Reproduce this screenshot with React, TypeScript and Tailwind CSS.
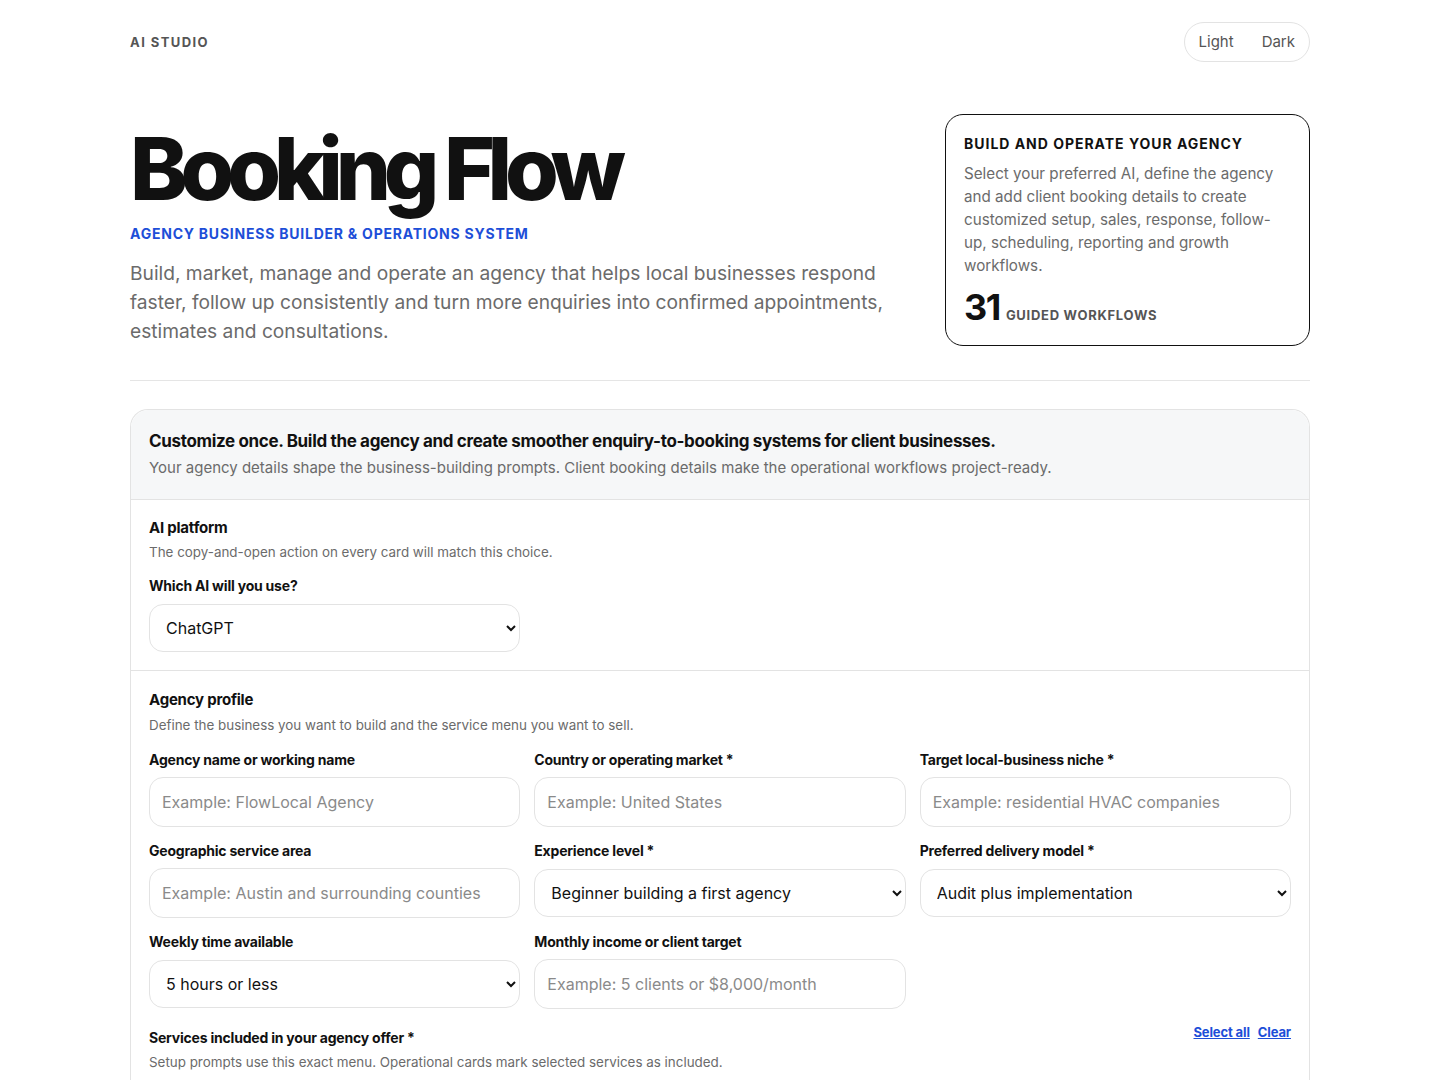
import React from "react";

const Field = ({ label, placeholder }: { label: string; placeholder: string }) => (
  <label className="flex flex-col">
    <span className="text-[14px] leading-5 font-bold tracking-[-0.015em] text-[#111]">{label}</span>
    <input
      placeholder={placeholder}
      className="mt-[7px] h-[50px] w-full rounded-[14px] border border-[#e3e3e3] bg-white px-3 text-[16px] text-[#111] placeholder:text-[#8a8a8a] outline-none"
    />
  </label>
);

const SelectField = ({ label, value, options }: { label: string; value: string; options: string[] }) => (
  <label className="flex flex-col">
    <span className="text-[14px] leading-5 font-bold tracking-[-0.015em] text-[#111]">{label}</span>
    <select
      defaultValue={value}
      className="mt-[8px] mb-px h-[48px] w-full rounded-[14px] border border-[#e3e3e3] bg-white px-3 text-[16px] text-[#111] outline-none"
    >
      {options.map((o) => (
        <option key={o}>{o}</option>
      ))}
    </select>
  </label>
);

export default function App() {
  return (
    <div className="min-h-screen bg-white font-['Inter',sans-serif] text-[#111]">
      <div className="mx-auto w-[1180px]">
        <header className="flex items-center justify-between pt-[22px]">
          <div className="mt-px text-[13px] font-bold tracking-[0.11em] text-[#555]">AI STUDIO</div>
          <div className="flex h-10 items-center rounded-full border border-[#e3e3e3]">
            <button className="px-[14px] text-[15px] text-[#555]">Light</button>
            <button className="px-[14px] text-[15px] text-[#555]">Dark</button>
          </div>
        </header>

        <section className="mt-[52px] flex items-start justify-between">
          <div className="w-[770px] pt-[11px]">
            <h1 className="text-[87px] leading-none font-extrabold tracking-[-0.083em] text-[#111]">Booking Flow</h1>
            <div className="mt-[12px] text-[14px] leading-5 font-bold tracking-[0.055em] text-[#1d4ed8]">
              AGENCY BUSINESS BUILDER &amp; OPERATIONS SYSTEM
            </div>
            <p className="mt-[15px] text-[19.2px] leading-[29px] text-[#6b6b6b]">
              Build, market, manage and operate an agency that helps local businesses respond faster, follow up
              consistently and turn more enquiries into confirmed appointments, estimates and consultations.
            </p>
          </div>
          <div className="w-[365px] rounded-[18px] border border-[#111] pt-[19px] pr-[24px] pb-[18px] pl-[18px]">
            <div className="text-[14px] leading-5 font-bold tracking-[0.07em] text-[#111]">BUILD AND OPERATE YOUR AGENCY</div>
            <p className="mt-[8px] text-[15.2px] leading-[23px] text-[#6b6b6b]">
              Select your preferred AI, define the agency and add client booking details to create customized setup,
              sales, response, follow-up, scheduling, reporting and growth workflows.
            </p>
            <div className="mt-[10px] flex items-baseline gap-[6px]">
              <span className="text-[36px] leading-[40px] font-bold tracking-[-0.04em] text-[#111]">31</span>
              <span className="text-[13px] font-bold tracking-[0.055em] text-[#555]">GUIDED WORKFLOWS</span>
            </div>
          </div>
        </section>

        <hr className="mt-[34px] border-t border-[#e5e5e5]" />

        <section className="mt-[28px] rounded-t-[18px] border border-b-0 border-[#e3e3e3]">
          <div className="rounded-t-[18px] border-b border-[#e3e3e3] bg-[#f6f7f8] px-[18px] pt-[18px] pb-[19px]">
            <h2 className="text-[17px] leading-[26px] font-bold tracking-[-0.02em] text-[#111]">
              Customize once. Build the agency and create smoother enquiry-to-booking systems for client businesses.
            </h2>
            <p className="mt-[2px] text-[15px] leading-6 text-[#6b6b6b]">
              Your agency details shape the business-building prompts. Client booking details make the operational
              workflows project-ready.
            </p>
          </div>

          <div className="border-b border-[#e3e3e3] px-[18px] pt-[17px] pb-[17px]">
            <h3 className="text-[15px] leading-[22px] font-bold tracking-[-0.015em]">AI platform</h3>
            <p className="mt-[3px] text-[13.4px] leading-5 text-[#6b6b6b]">
              The copy-and-open action on every card will match this choice.
            </p>
            <div className="mt-[14px] w-[371px]">
              <SelectField label="Which AI will you use?" value="ChatGPT" options={["ChatGPT", "Claude", "Gemini", "Copilot"]} />
            </div>
          </div>

          <div className="px-[18px] pt-[18px] pb-10">
            <h3 className="text-[15px] leading-[22px] font-bold tracking-[-0.015em]">Agency profile</h3>
            <p className="mt-[4px] text-[13.4px] leading-5 text-[#6b6b6b]">
              Define the business you want to build and the service menu you want to sell.
            </p>
            <div className="mt-[15px] grid grid-cols-3 gap-x-[14px] gap-y-[14px]">
              <Field label="Agency name or working name" placeholder="Example: FlowLocal Agency" />
              <Field label="Country or operating market *" placeholder="Example: United States" />
              <Field label="Target local-business niche *" placeholder="Example: residential HVAC companies" />
              <Field label="Geographic service area" placeholder="Example: Austin and surrounding counties" />
              <SelectField
                label="Experience level *"
                value="Beginner building a first agency"
                options={["Beginner building a first agency", "Some freelance experience", "Established agency"]}
              />
              <SelectField
                label="Preferred delivery model *"
                value="Audit plus implementation"
                options={["Audit plus implementation", "Done-for-you", "Consulting only"]}
              />
              <SelectField
                label="Weekly time available"
                value="5 hours or less"
                options={["5 hours or less", "5 to 10 hours", "10 to 20 hours", "20+ hours"]}
              />
              <Field label="Monthly income or client target" placeholder="Example: 5 clients or $8,000/month" />
            </div>

            <div className="mt-[19px] flex items-start justify-between">
              <div>
                <div className="text-[14px] leading-5 font-bold tracking-[-0.015em]">Services included in your agency offer *</div>
                <p className="mt-[4px] text-[13.4px] leading-5 text-[#6b6b6b]">
                  Setup prompts use this exact menu. Operational cards mark selected services as included.
                </p>
              </div>
              <div className="-mt-[5px] flex gap-2 text-[13px] font-bold tracking-[-0.01em] text-[#1d4ed8]">
                <button className="underline">Select all</button>
                <button className="underline">Clear</button>
              </div>
            </div>
          </div>
        </section>
      </div>
    </div>
  );
}
